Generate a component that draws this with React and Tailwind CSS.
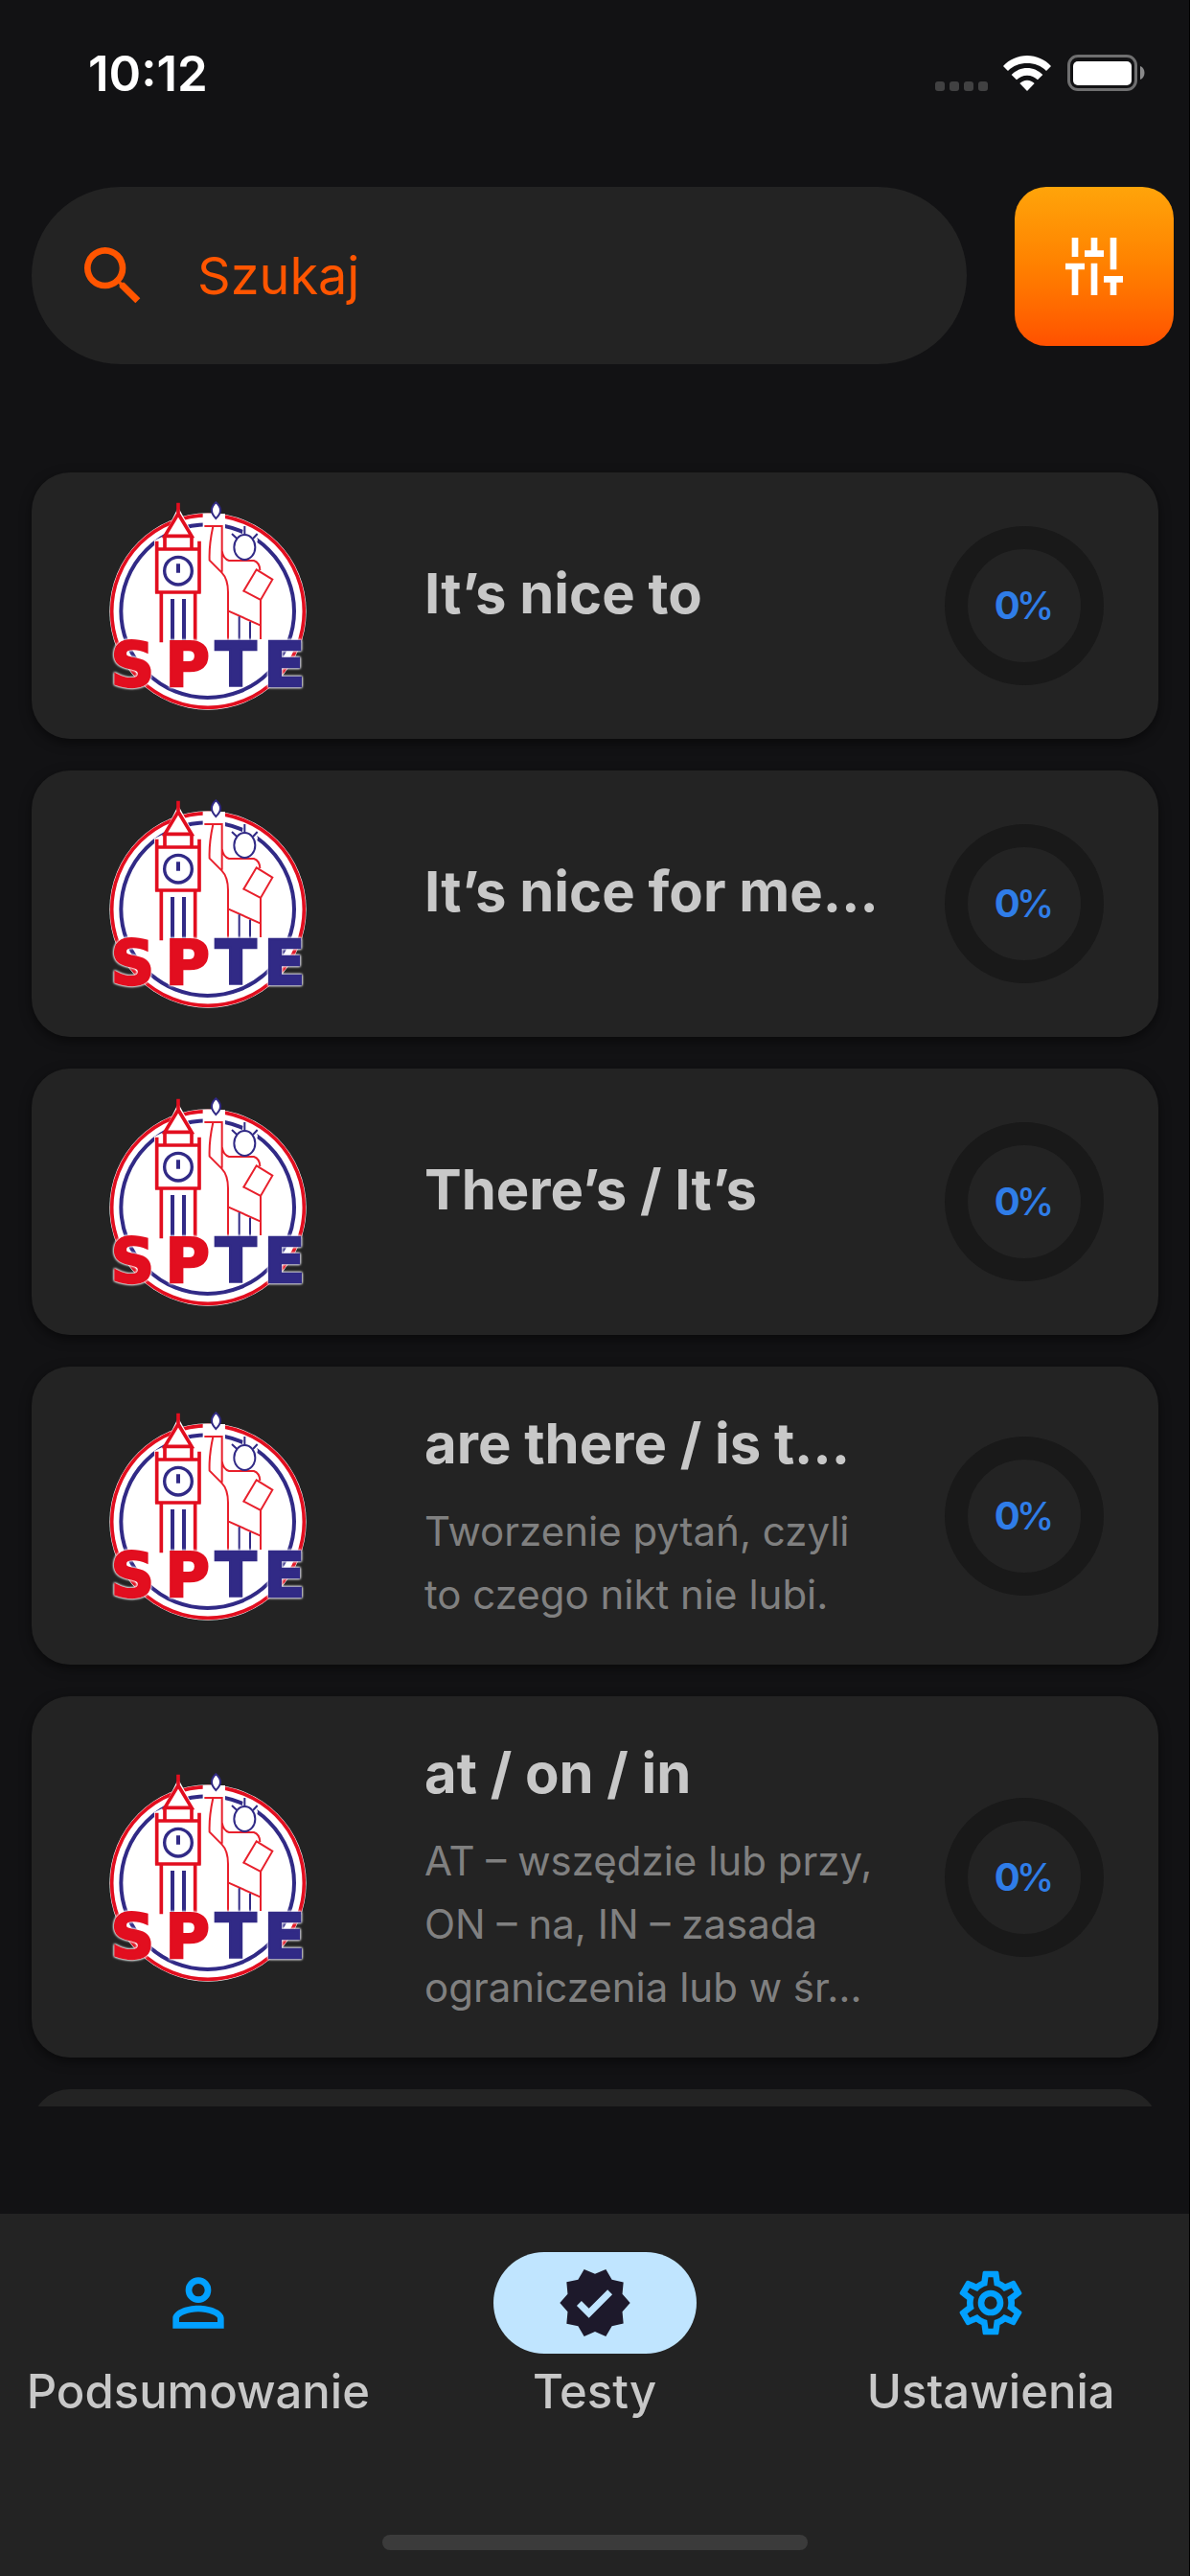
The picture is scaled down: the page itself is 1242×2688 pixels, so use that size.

import { MdSearch, MdVerified } from 'react-icons/md'

const TESTS = [
  { title: 'It’s nice to', progress: 0 },
  { title: 'It’s nice for me…', progress: 0 },
  { title: 'There’s / It’s', progress: 0 },
  {
    title: 'are there / is t…',
    lines: ['Tworzenie pytań, czyli', 'to czego nikt nie lubi.'],
    progress: 0,
  },
  {
    title: 'at / on / in',
    lines: ['AT – wszędzie lub przy,', 'ON – na, IN – zasada', 'ograniczenia lub w śr…'],
    progress: 0,
  },
]

// ── Icons ─────────────────────────────────────────────────────────────────────

function PersonIcon() {
  return (
    <svg className="size-20" viewBox="0 0 24 24" fill="currentColor" aria-hidden="true">
      <path fillRule="evenodd" d="M12 12a4 4 0 1 1 0-8 4 4 0 0 1 0 8zm0-2a2 2 0 1 0 0-4 2 2 0 0 0 0 4z" />
      <path fillRule="evenodd" d="M4 20v-3.2C4 14.4 8.2 12.8 12 12.8s8 1.6 8 4V20zm2-2h12v-1.2c0-.7-2.9-2-6-2s-6 1.3-6 2z" />
    </svg>
  )
}

function CogIcon() {
  return (
    <svg className="size-20" viewBox="0 0 24 24" fill="currentColor" aria-hidden="true">
      <path d="M12 8a4 4 0 0 1 4 4 4 4 0 0 1-4 4 4 4 0 0 1-4-4 4 4 0 0 1 4-4m0 2a2 2 0 0 0-2 2 2 2 0 0 0 2 2 2 2 0 0 0 2-2 2 2 0 0 0-2-2m-2 12c-.25 0-.46-.18-.5-.42l-.37-2.65c-.63-.25-1.17-.59-1.69-.99l-2.49 1.01c-.22.08-.49 0-.61-.22l-2-3.46c-.13-.22-.07-.49.12-.64l2.11-1.66L4.5 12l.07-1-2.11-1.63c-.19-.15-.25-.42-.12-.64l2-3.46c.12-.22.39-.31.61-.22l2.49 1c.52-.39 1.06-.73 1.69-.98l.37-2.65c.04-.24.25-.42.5-.42h4c.25 0 .46.18.5.42l.37 2.65c.63.25 1.17.59 1.69.98l2.49-1c.22-.09.49 0 .61.22l2 3.46c.13.22.07.49-.12.64L19.43 11l.07 1-.07 1 2.11 1.63c.19.15.25.42.12.64l-2 3.46c-.12.22-.39.31-.61.22l-2.49-1c-.52.39-1.06.73-1.69.98l-.37 2.65c-.04.24-.25.42-.5.42h-4m1.25-18-.37 2.61c-1.2.25-2.26.89-3.03 1.78L5.44 7.35l-.75 1.3L6.8 10.2a5.55 5.55 0 0 0 0 3.6l-2.12 1.56.75 1.3 2.43-1.04c.77.88 1.82 1.52 3.01 1.76l.37 2.62h1.52l.37-2.61c1.19-.25 2.24-.89 3.01-1.77l2.43 1.04.75-1.3-2.12-1.55c.4-1.17.4-2.44 0-3.61l2.11-1.55-.75-1.3-2.41 1.04a5.42 5.42 0 0 0-3.03-1.77L12.75 4h-1.5z" />
    </svg>
  )
}

function SlidersIcon() {
  return (
    <svg className="size-15" viewBox="0 0 18 18" fill="currentColor" aria-hidden="true">
      <path d="M2 0h2v6H2zM8 0h2v4h2v2H6V4h2zM14 0h2v10h-2zM0 8h6v2H4v8H2v-8H0zM8 8h2v10H8zM12 12h6v2h-2v4h-2v-4h-2z" />
    </svg>
  )
}

function WifiIcon() {
  return (
    <svg className="h-[37px] w-[50px]" viewBox="0 0 150 111" fill="currentColor" aria-hidden="true">
      <path d="M75 0C104 0 131 12 150 33L135 48C119 32 98 24 75 24S31 32 15 48L0 33C19 12 46 0 75 0z" />
      <path d="M75 39C94 39 111 47 124 60L108 76C99 67 88 62 75 62S51 67 42 76L26 60C39 47 56 39 75 39z" />
      <path d="M75 77C84 77 92 81 98 87L75 111 52 87C58 81 66 77 75 77z" />
    </svg>
  )
}

function BatteryIcon() {
  return (
    <svg className="h-[38px] w-[81px]" viewBox="0 0 81 38" aria-hidden="true">
      <rect x="1.5" y="1.5" width="70" height="35" rx="9.5" fill="none" stroke="#6f6f70" strokeWidth="3" />
      <rect x="6" y="7" width="61" height="25" rx="5" fill="#fff" />
      <path d="M76 12c6 2 6 12 0 14z" fill="#8a8a8b" />
    </svg>
  )
}

function Logo() {
  return (
    <svg className="h-[220px] w-[208px] shrink-0" viewBox="70 70 624 660" role="img" aria-label="SPTE">
      <circle cx="382" cy="418" r="308" fill="#fff" />
      <circle cx="382" cy="418" r="301" fill="none" stroke="#e20e1f" strokeWidth="11" />
      <circle cx="381" cy="417" r="271" fill="none" stroke="#312a86" strokeWidth="12" />

      {/* White clearings behind the two figures */}
      <path d="M289 92l54 98 22 8v164l-15 0v160H232V362h-18V196l30-14z" fill="#fff" />
      <path d="M366 112h70v50h-70zM492 160l36 4 10 30-10 40-50 10z" fill="#fff" />

      {/* Clock tower */}
      <g fill="none" stroke="#e20e1f" strokeWidth="11">
        <path d="M289 78v32M289 112l-42 70h84zM247 184v38M331 184v38M222 198v162M355 198v162M217 223h143M217 358h143M236 360v155M342 360v155" />
      </g>
      <g fill="none" stroke="#312a86">
        <circle cx="289" cy="291" r="43" strokeWidth="10" />
        <path d="M289 269v28M271 379v136M307 379v136" strokeWidth="12" />
      </g>

      {/* Statue */}
      <g fill="none" stroke="#e8202c" strokeWidth="6">
        <path d="M371 151h58M398 152q-13 60-11 106l38 38q20 20 20 62v152M426 152v142M426 228q4 26 22 31h78q18 6 19 30M445 416l102 46M547 380v125" />
        <path d="M534 287l50 31-37 64-53-28z" />
      </g>
      <g fill="#fff" stroke="#312a86" strokeWidth="6">
        <ellipse cx="497" cy="217" rx="33" ry="39" />
        <path d="M407 77q28 24 0 50q-26-26 0-50z" />
        <path d="M497 151v26M457 175l16 15M537 175l-14 15M480 434v78M514 450v62" />
      </g>

      {/* The letters are spread over the full width of the ring */}
      <text
        y="651"
        className="[filter:drop-shadow(0_0_3px_#fff)_drop-shadow(0_0_3px_#fff)]"
        fontFamily="'DejaVu Sans', sans-serif"
        fontWeight="700"
        fontSize="190"
        textAnchor="middle"
        strokeWidth="7"
      >
        <tspan x="146" fill="#e20e1f" stroke="#e20e1f">S</tspan>
        <tspan x="318" fill="#e20e1f" stroke="#e20e1f">P</tspan>
        <tspan x="469" fill="#312a86" stroke="#312a86">T</tspan>
        <tspan x="622" fill="#312a86" stroke="#312a86">E</tspan>
      </text>
    </svg>
  )
}

// ── Status bar ────────────────────────────────────────────────────────────────

function StatusBar() {
  return (
    <div className="flex h-[152px] shrink-0 items-center justify-between pr-[46px] pl-[92px] text-white">
      <span className="text-[51px] leading-none font-semibold">10:12</span>
      <div className="flex items-center">
        <div className="mt-[27px] mr-4 flex gap-[5px]">
          {[0, 1, 2, 3].map((i) => (
            <span key={i} className="size-[10px] rounded-[3px] bg-[#414142]" />
          ))}
        </div>
        <WifiIcon />
        <div className="ml-[17px]">
          <BatteryIcon />
        </div>
      </div>
    </div>
  )
}

// ── Search ────────────────────────────────────────────────────────────────────

function SearchRow() {
  return (
    <form className="mt-[43px] flex shrink-0 items-start gap-[50px] pr-4 pl-[33px]">
      <label className="flex h-[185px] min-w-0 flex-1 items-center rounded-full bg-[#232323] pl-[45px] text-[#ff5500]">
        <MdSearch className="size-20 shrink-0" aria-hidden="true" />
        <input
          type="search"
          aria-label="Szukaj"
          placeholder="Szukaj"
          className="ml-12 min-w-0 flex-1 bg-transparent text-[54px] outline-none placeholder:text-[#ff5500]"
        />
      </label>
      <button
        type="button"
        aria-label="Filtry"
        className="flex size-[166px] items-center justify-center rounded-[33px] bg-linear-to-b from-[#ffa40a] via-[#ff8000] to-[#ff5000] text-white"
      >
        <SlidersIcon />
      </button>
    </form>
  )
}

// ── Test card ─────────────────────────────────────────────────────────────────

function ProgressRing({ value }) {
  return (
    <div className="flex size-[166px] shrink-0 items-center justify-center rounded-full border-24 border-[#191919] text-[40px] text-[#2f7de8]">
      <span className="font-bold">{value}</span>
      <span className="-ml-1 font-medium">%</span>
    </div>
  )
}

function TestCard({ test }) {
  return (
    <li className="flex min-h-[278px] shrink-0 items-center rounded-[40px] bg-[#232323] pr-[57px] pl-20 shadow-[0_4px_12px_rgba(0,0,0,0.5)]">
      <Logo />
      <div className="ml-[122px] min-w-0 flex-1 py-10">
        <h2 className={`text-[58px] leading-20 font-bold whitespace-nowrap text-[#c8c8c8] ${test.lines ? 'mb-[19px]' : 'mb-[26px]'}`}>
          {test.title}
        </h2>
        {test.lines && (
          <p className="text-[42px] leading-[66px] whitespace-nowrap text-[#808080]">
            {test.lines.map((line) => (
              <span key={line} className="block">{line}</span>
            ))}
          </p>
        )}
      </div>
      <ProgressRing value={test.progress} />
    </li>
  )
}

// ── Bottom navigation ─────────────────────────────────────────────────────────

function NavItem({ icon, label, active }) {
  return (
    <a href="#" aria-current={active ? 'page' : undefined} className="flex flex-1 flex-col items-center gap-2">
      <span
        className={`flex h-[106px] w-[212px] items-center justify-center rounded-full ${
          active ? 'bg-[#c0e5ff] text-[#1d192b]' : 'text-[#02a0ff]'
        }`}
      >
        {icon}
      </span>
      <span className="text-[49px] leading-16 font-medium text-[#c8c8c8]">{label}</span>
    </a>
  )
}

function BottomNav() {
  return (
    <div className="flex h-[378px] shrink-0 flex-col items-center justify-between bg-[#232323] pt-10 pb-[27px]">
      <nav className="flex w-full">
        <NavItem icon={<PersonIcon />} label="Podsumowanie" />
        <NavItem icon={<MdVerified className="size-20" />} label="Testy" active />
        <NavItem icon={<CogIcon />} label="Ustawienia" />
      </nav>
      <div className="h-4 w-[444px] rounded-full bg-[#3b3b3b]" />
    </div>
  )
}

// ── Main ──────────────────────────────────────────────────────────────────────

export default function App() {
  return (
    <div className="flex h-screen flex-col border-r border-black bg-[#121214] font-['Inter',sans-serif]">
      <StatusBar />
      <SearchRow />
      <main className="mt-[101px] mb-28 min-h-0 flex-1 overflow-hidden pt-3 pr-8 pl-[33px]">
        <ul className="flex flex-col gap-[33px]">
          {TESTS.map((test) => (
            <TestCard key={test.title} test={test} />
          ))}
          <li aria-hidden="true" className="h-[278px] shrink-0 rounded-[40px] bg-[#232323]" />
        </ul>
      </main>
      <BottomNav />
    </div>
  )
}
